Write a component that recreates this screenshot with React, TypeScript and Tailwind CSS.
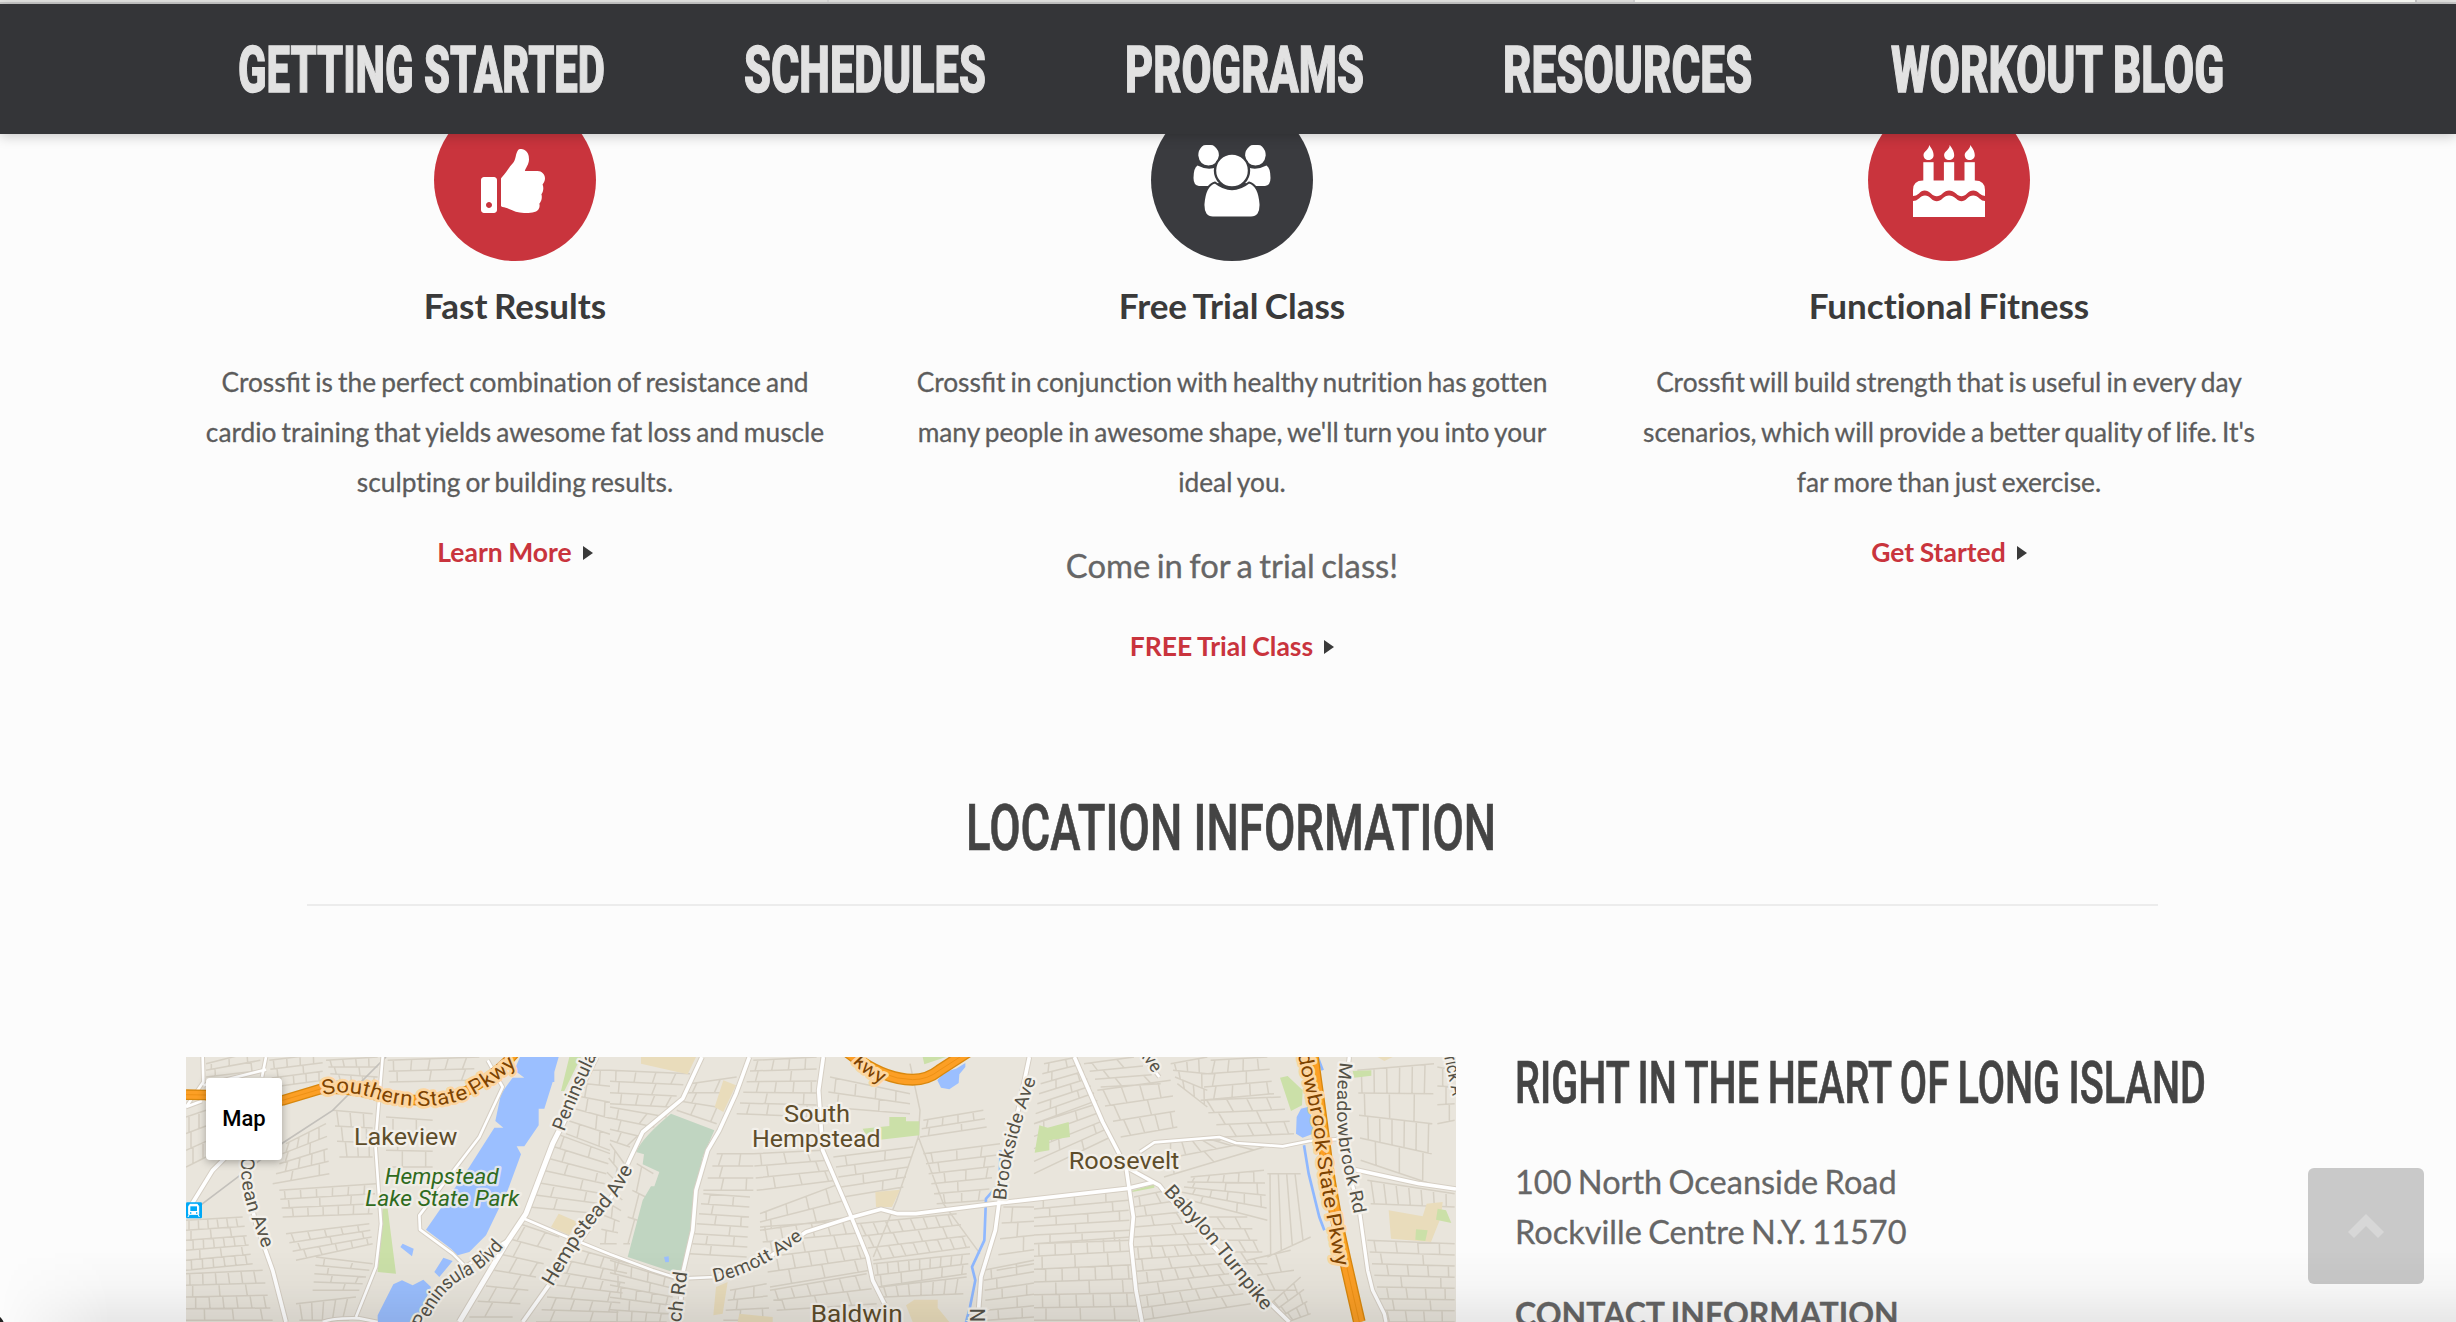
import { useLayoutEffect, useRef, useState, type ReactNode } from "react";
import { FaThumbsUp } from "react-icons/fa";

type Pt = [number, number];

/** Single line of condensed type squeezed to the width of its box. */
function Condensed({ className, children }: { className: string; children: string }) {
  const box = useRef<HTMLSpanElement>(null);
  const text = useRef<HTMLSpanElement>(null);
  const [scale, setScale] = useState(0.7);
  useLayoutEffect(() => {
    if (box.current && text.current) {
      setScale(box.current.offsetWidth / text.current.offsetWidth);
    }
  }, []);
  return (
    <span ref={box} className={`block whitespace-nowrap ${className}`}>
      <span ref={text} className="inline-block origin-left" style={{ transform: `scaleX(${scale})` }}>
        {children}
      </span>
    </span>
  );
}

/** Body copy that keeps only the "fi" ligature. */
function Copy({ children }: { children: string }) {
  return (
    <>
      {children.split("fi").map((part, i) => (
        <span key={i}>
          {i > 0 && <span className="[font-variant-ligatures:common-ligatures]">fi</span>}
          {part}
        </span>
      ))}
    </>
  );
}

function Nav() {
  const items: [string, string][] = [
    ["GETTING STARTED", "w-[367px]"],
    ["SCHEDULES", "w-[242px]"],
    ["PROGRAMS", "w-[239px]"],
    ["RESOURCES", "w-[249px]"],
    ["WORKOUT BLOG", "w-[333px]"],
  ];
  return (
    <header className="relative z-10 shrink-0">
      <div className="flex h-1 border-b-2 border-[#cbcbcb] bg-[#e6e6e4]">
        <div className="w-[829px] border-r-2 border-[#cfcfcf]" />
        <div className="w-[806px] border-r-2 border-[#cfcfcf]" />
        <div className="w-[782px] border-r-2 border-[#c0c0c0] bg-[#f4f5f0]" />
      </div>
      <nav className="flex h-[130px] items-center justify-center gap-[139px] bg-[#343538] pt-[2px] pl-[5px] shadow-[0_2px_12px_rgba(0,0,0,0.22)]">
        {items.map(([label, width]) => (
          <a
            key={label}
            className={`font-[Roboto] text-[64px] leading-[75px] font-extrabold text-[#e2e2e2] [-webkit-text-stroke:1.4px_#e2e2e2] ${width}`}
          >
            <Condensed className="w-full">{label}</Condensed>
          </a>
        ))}
      </nav>
    </header>
  );
}

function PeopleIcon() {
  return (
    <svg className="mt-[2px] h-[74px] w-[78px]" viewBox="0 0 78 74" fill="#fff">
      <path d="M9 2.400Q10.500 1 13 1H18Q20 1 21.600 2.400Q26 6 25.900 11.500Q24.500 21 15.500 21.400Q6.500 21 5.300 11.500Q5.200 6 9 2.400Z" />
      <path d="M56.400 2.400Q58 1 60 1H65Q67.500 1 69 2.400Q72.800 6 72.700 11.500Q71.500 21 62.500 21.400Q53.500 21 52.100 11.500Q52 6 56.400 2.400Z" />
      <path d="M4.500 21.500Q15 27 24 23Q23 33 28 38L19 42H6Q.5 41.500.5 34Q.5 24 4.500 21.500Z" />
      <path d="M73.500 21.500Q63 27 54 23Q55 33 50 38L59 42H72Q77.500 41.500 77.500 34Q77.500 24 73.500 21.500Z" />
      <path
        d="M22 38.500Q39 52 56 38.500Q66 41 67.500 60Q68 73.500 58 73.500H20Q10 73.500 10.500 60Q12 41 22 38.500Z"
        stroke="#3a3b3f"
        strokeWidth="2"
      />
      <circle cx="39" cy="26.500" r="17" stroke="#3a3b3f" strokeWidth="2.400" />
    </svg>
  );
}

function CakeIcon() {
  return (
    <svg className="mt-[2px] h-[72px] w-[72px]" viewBox="0 0 72 72" fill="#fff">
      {[10.3, 30.9, 51.500].map((x) => (
        <g key={x} transform={`translate(${x} 0)`}>
          <path d="M5.800 0C9 4.500 10.300 7 10.300 10.200C10.300 13 8 15 5.200 15C2.400 15 .2 13 .2 10C.2 6 5.800 5 5.800 0Z" />
          <rect y="17.200" width="10.300" height="20" />
        </g>
      ))}
      <path d="M0 51V45Q0 35.500 10 35.500H62Q72 35.500 72 45V51Q69 50.500 66.500 48.500C63 44.500 57.500 44.500 54 48.500C50.500 52 46.500 52 43 48.500C38.500 44.500 33.500 44.500 29.500 48.500C26 52 21.500 52 18 48.500C14 44.500 9 44.500 6 48.500Q3 51 0 51Z" />
      <path d="M0 56Q3 56 6 53.500C9.500 49.500 14.500 49.500 18 53.500C21.500 57 26 57 29.500 53.500C33.500 49.500 38.500 49.500 43 53.500C46.500 57 50.500 57 54 53.500C57.500 49.500 63 49.500 66.500 53.500Q69 56 72 56V72H0Z" />
    </svg>
  );
}

function Feature({
  icon,
  circle,
  title,
  lines,
  note,
  link,
}: {
  icon: ReactNode;
  circle: string;
  title: string;
  lines: string[];
  note?: string;
  link: string;
}) {
  return (
    <section className="flex w-[656px] flex-col items-center text-center [font-variant-ligatures:none]">
      <div className={`flex size-[162px] items-center justify-center rounded-full ${circle}`}>{icon}</div>
      <h3 className="mt-[23px] text-[35px] leading-[42px] font-bold [word-spacing:-2px] text-[#3a3a3a]">{title}</h3>
      <p className="mt-[31px] text-[26.300px] leading-[50px] [word-spacing:-1.600px] whitespace-nowrap text-[#5c5c5c] [-webkit-text-stroke:0.3px_#5c5c5c]">
        {lines.map((l) => (
          <span key={l} className="block">
            <Copy>{l}</Copy>
          </span>
        ))}
      </p>
      {note && (
        <p className="mt-[34px] mb-[10px] text-[32.800px] leading-[50px] [word-spacing:-2px] text-[#666] [-webkit-text-stroke:0.3px_#666]">
          {note}
        </p>
      )}
      <a className="mt-[20px] flex items-center gap-[11px] text-[26.500px] leading-[50px] font-bold [word-spacing:-1px] text-[#c9343d]">
        {link}
        <span className="mt-[2px] border-y-[7px] border-l-[10px] border-y-transparent border-l-[#3a3a3a]" />
      </a>
    </section>
  );
}

/** Street grid: bilinear interpolation over a quad a-b-c-d. */
function grid(a: Pt, b: Pt, c: Pt, d: Pt, rows: number, cols: number) {
  const mix = (p: Pt, q: Pt, t: number): Pt => [p[0] + (q[0] - p[0]) * t, p[1] + (q[1] - p[1]) * t];
  const f = (p: Pt) => `${p[0].toFixed(0)} ${p[1].toFixed(0)}`;
  let out = "";
  for (let i = 0; i <= rows; i++) {
    const t = rows ? i / rows : 0;
    out += `M${f(mix(a, d, t))}L${f(mix(b, c, t))}`;
  }
  for (let j = 0; j < cols; j++) {
    for (let i = 0; i < rows; i++) {
      const t = (j + 0.3 + 0.4 * ((i * 7 + j * 3) % 3) * 0.5) / cols;
      const top = mix(mix(a, b, t), mix(d, c, t), i / rows);
      const end = mix(mix(a, b, t), mix(d, c, t), (i + 1) / rows);
      if ((i + j * 2) % 4 !== 3) out += `M${f(top)}L${f(end)}`;
    }
  }
  return out;
}

const streetsWest = [
  grid([60, 20], [220, -20], [225, 40], [60, 60], 2, 3),
  grid([0, 180], [60, 160], [60, 300], [0, 330], 3, 2),
  grid([250, 10], [410, -10], [410, 70], [260, 90], 3, 4),
  grid([420, 10], [575, 0], [575, 90], [440, 70], 3, 4),
  grid([605, 10], [880, 0], [850, 70], [610, 75], 2, 5),
  grid([300, 260], [420, 200], [430, 350], [260, 380], 4, 4),
  grid([440, 160], [560, 170], [560, 300], [460, 300], 3, 3),
  grid([280, 400], [570, 380], [560, 470], [290, 480], 3, 6),
  grid([0, 490], [170, 480], [200, 620], [0, 640], 5, 6),
  grid([0, 650], [230, 640], [260, 790], [0, 790], 4, 6),
  grid([300, 530], [550, 500], [560, 560], [330, 610], 3, 5),
  grid([390, 600], [560, 620], [520, 700], [380, 700], 4, 2),
  grid([330, 740], [510, 720], [490, 790], [340, 790], 1, 5),
  grid([600, 180], [740, 190], [740, 330], [600, 330], 3, 2),
  grid([1110, 230], [1272, 290], [1240, 470], [1030, 450], 6, 2),
  grid([1190, 40], [1272, 40], [1272, 280], [1140, 230], 5, 2),
  grid([1000, 500], [1120, 540], [980, 780], [850, 780], 6, 2),
  grid([1150, 570], [1330, 620], [1290, 795], [1050, 795], 6, 4),
].join("");

const streetsMid = [
  grid([0, 40], [240, 50], [180, 150], [0, 140], 3, 4),
  grid([0, 150], [170, 180], [60, 270], [0, 250], 3, 2),
  grid([240, 80], [380, 60], [320, 200], [200, 160], 3, 2),
  grid([430, 10], [620, 0], [620, 180], [380, 170], 5, 4),
  grid([0, 260], [50, 330], [20, 560], [-30, 560], 7, 1),
  grid([80, 320], [130, 350], [60, 560], [40, 560], 3, 1),
  grid([660, 60], [900, 110], [900, 170], [650, 150], 2, 4),
  grid([320, 290], [430, 290], [430, 400], [280, 400], 3, 2),
  grid([430, 290], [640, 280], [680, 370], [440, 400], 3, 3),
  grid([280, 410], [420, 420], [410, 600], [240, 590], 6, 2),
  grid([450, 470], [690, 380], [720, 480], [450, 520], 2, 4),
  grid([670, 300], [910, 270], [880, 390], [700, 420], 4, 2),
  grid([940, 290], [1170, 260], [1130, 430], [980, 440], 5, 3),
  grid([940, 190], [1120, 160], [1130, 210], [930, 240], 2, 4),
  grid([450, 510], [730, 490], [780, 640], [480, 690], 4, 6),
  grid([740, 500], [1040, 470], [1080, 570], [790, 610], 3, 8),
  grid([790, 620], [1080, 590], [1070, 650], [800, 690], 2, 9),
  grid([810, 690], [1070, 660], [1060, 710], [820, 720], 1, 7),
  grid([480, 700], [770, 650], [800, 740], [500, 760], 2, 6),
  grid([360, 700], [470, 680], [480, 790], [340, 790], 3, 2),
  grid([0, 610], [200, 670], [170, 795], [0, 795], 5, 4),
  grid([1180, 450], [1272, 450], [1272, 620], [1160, 640], 4, 1),
  grid([1120, 640], [1272, 610], [1272, 780], [1130, 790], 5, 2),
  "M900 20L930 160L925 240L1000 440L1110 590M925 240L860 430L790 600",
].join("");

const streetsEast = [
  grid([30, 20], [130, 0], [190, 130], [0, 200], 6, 2),
  grid([0, 200], [190, 140], [230, 240], [0, 350], 4, 2),
  grid([150, 20], [300, 0], [380, 80], [200, 90], 3, 2),
  grid([190, 100], [410, 70], [430, 210], [260, 240], 3, 4),
  grid([410, 20], [520, 0], [520, 150], [430, 80], 3, 3),
  grid([530, 10], [700, 0], [720, 110], [500, 130], 3, 4),
  grid([500, 130], [740, 120], [780, 230], [570, 240], 3, 4),
  grid([400, 250], [560, 250], [690, 270], [390, 360], 2, 5),
  grid([470, 360], [690, 340], [700, 490], [430, 420], 4, 5),
  grid([700, 350], [800, 350], [830, 540], [700, 600], 1, 4),
  grid([0, 430], [280, 400], [290, 550], [0, 560], 5, 3),
  grid([0, 560], [290, 540], [310, 790], [0, 790], 6, 6),
  grid([300, 420], [400, 400], [520, 560], [300, 570], 5, 2),
  grid([300, 570], [520, 560], [650, 740], [320, 790], 6, 6),
  grid([480, 480], [640, 480], [700, 620], [600, 620], 4, 3),
  grid([640, 610], [770, 580], [790, 700], [700, 700], 2, 2),
  grid([710, 740], [800, 660], [830, 770], [760, 795], 3, 3),
  grid([970, 40], [1200, 20], [1190, 380], [980, 310], 4, 6),
  grid([1210, 30], [1262, 40], [1262, 190], [1210, 200], 3, 1),
  grid([1000, 370], [1262, 410], [1262, 450], [1010, 440], 1, 7),
  grid([1000, 550], [1262, 560], [1262, 795], [1050, 795], 7, 4),
].join("");

type Road = { d: string; w?: number };
const roads: Road[] = [
  { d: "M50 0L52 75L0 150M52 85L240 38M240 0L228 60M48 132L0 150" },
  { d: "M590 0L568 260L585 500L570 630L510 780M410 795Q440 782 520 784L575 795" },
  { d: "M905 10L950 90L880 240L700 475L702 518L800 590L838 628L965 550" },
  { d: "M18 440L80 340L120 300M185 400L210 500L260 640L300 795", w: 11 },
  { d: "M1230 0L1100 260L1020 470L960 560L820 795", w: 15 },
  { d: "M1015 485L1120 530L1272 592L1400 640L1480 665L1590 660" },
  { d: "M1548 0L1490 125L1370 225L1330 310L1290 400L1010 795", w: 11 },
  { d: "M1690 0L1650 110L1600 220L1565 280L1530 400L1520 520L1490 650L1480 795", w: 11 },
  { d: "M1912 0L1898 100L1910 280L1996 480L2045 600L2060 670L2105 760", w: 11 },
  { d: "M1585 660L1750 600L1860 525L2000 480L2085 457L2135 470L2190 470L2440 438L2820 395L2905 375", w: 11 },
  { d: "M2530 0L2440 430L2428 520L2385 660L2375 795", w: 11 },
  { d: "M2665 0L2750 195L2820 330L2842 480L2835 560L2850 700L2868 795", w: 11 },
  { d: "M2820 330L2920 385L2940 410L3130 620L3310 795", w: 11 },
  { d: "M2862 285L2905 256L3100 240L3150 258L3290 268L3370 252L3460 246" },
  { d: "M3490 0L3460 240L3520 460L3545 640L3560 700L3595 770L3600 795", w: 10 },
  { d: "M3495 335L3700 380L3810 396", w: 11 },
  { d: "M2858 -20L2920 60" },
];

const labelPaths: Record<string, string> = {
  southern: "M412 116Q470 95 560 122Q700 170 840 126Q930 85 1010 5",
  ocean: "M166 300Q160 380 190 470Q212 520 238 600",
  peninsula: "M1135 225Q1190 80 1260 -60",
  blvd: "M715 815Q755 710 830 665Q920 625 980 530",
  hempAve: "M1100 690L1190 540L1300 410L1350 320",
  demott: "M1585 675Q1720 650 1870 530",
  ch: "M1480 830L1505 640",
  kwy: "M2000 15Q2035 60 2110 90",
  brookside: "M2460 430Q2470 280 2560 40",
  nAve: "M2850 -18Q2885 20 2905 58",
  babylon: "M2932 405L3060 545L3235 765",
  meadowPkwy: "M3320 -80Q3350 60 3380 190Q3395 350 3450 630",
  meadowRd: "M3462 15Q3440 180 3472 330Q3490 400 3505 480",
  rick: "M3775 0L3800 120",
};

function RoadLabel({ path, size, length, highway, children }: { path: string; size: number; length: number; highway?: boolean; children: string }) {
  return (
    <text
      fontSize={size}
      fill={highway ? "#7d4300" : "#555247"}
      stroke={highway ? "#fdd6a0" : "#f3f0ea"}
      strokeWidth={highway ? 16 : 14}
      strokeLinejoin="round"
      paintOrder="stroke"
    >
      <textPath href={`#${path}`} textLength={length} lengthAdjust="spacingAndGlyphs">
        {children}
      </textPath>
    </text>
  );
}

function PlaceLabel({ x, y, length, size = 70, park, children }: { x: number; y: number; length: number; size?: number; park?: boolean; children: string }) {
  return (
    <text
      x={x}
      y={y}
      fontSize={size}
      fontStyle={park ? "italic" : "normal"}
      fill={park ? "#2f6b20" : "#5e4d2a"}
      stroke="#f3f0ea"
      strokeOpacity={park ? 0.75 : 1}
      strokeWidth="14"
      strokeLinejoin="round"
      paintOrder="stroke"
      textLength={length}
      lengthAdjust="spacingAndGlyphs"
    >
      {children}
    </text>
  );
}

function StreetMap() {
  return (
    <svg className="block h-[265px] w-[1270px] font-[Roboto]" viewBox="0 0 3810 795">
      <defs>
        {Object.entries(labelPaths).map(([id, d]) => (
          <path key={id} id={id} d={d} />
        ))}
      </defs>
      <rect width="3810" height="795" fill="#e9e5dc" />

      <g fill="none" stroke="#d6d0c4" strokeWidth="4.500">
        <path d={streetsWest} />
        <path d={streetsMid} transform="translate(1272 0)" />
        <path d={streetsEast} transform="translate(2544 0)" />
      </g>
      <path d="M30 455L290 258L440 160L600 0" fill="none" stroke="#c3c0bb" strokeWidth="5" />

      <path fill="#e9dcbb" d="M1365 0H1530L1505 52L1365 20ZM1612 70L1650 85L1612 165L1586 150ZM1118 470L1175 495L1150 535L1095 510ZM2068 405L2142 398L2118 450H2070ZM1590 690L1625 675L1610 770L1582 775ZM1660 770L1760 780V795H1655ZM2160 745L2185 728H2255V752L2290 795H2180ZM3608 460L3710 478L3722 440L3770 435L3765 480L3735 555L3615 545ZM3575 0H3620L3595 12Z" />
      <path fill="#cbe0a8" d="M590 455H605L630 650L575 645ZM1150 0H1185L1135 102H1125ZM2110 180H2160V193H2200V235L2050 252L2030 215L2110 207ZM2210 0H2280L2215 22ZM2560 205L2585 212L2648 195L2652 240L2590 250V280L2546 287ZM2835 402L2905 382V392L2835 406ZM3282 62L3305 57L3350 100L3348 145L3315 162ZM3500 42L3556 40V56L3505 62ZM3755 455L3780 460L3796 498L3750 488ZM3690 517L3725 520L3718 552L3688 548Z" />
      <path fill="#c0d5c1" d="M1455 170L1585 220L1550 300L1530 400L1522 520L1490 655L1325 600L1370 430L1395 388H1405L1420 345L1370 322L1374 292L1350 285Q1370 240 1455 170Z" />
      <g fill="#9bbfff">
        <path d="M1002 0H1118L1105 45V75H1100L1075 155H1058V205L1015 268H992L1005 292L965 400L900 535L850 585L815 595L795 575L720 518L850 330L925 212L952 212L928 192L945 110L980 62H1015L985 40Z" />
        <path d="M650 560L683 575L678 598L643 570ZM772 602L800 612L760 660L745 645ZM575 795V775L622 682L648 670L680 685L712 668L735 690L690 795ZM1434 600L1448 598L1449 615L1438 616Z" />
        <path d="M2338 18L2310 35L2275 45L2254 70L2265 92L2290 97L2318 78L2320 52L2338 30ZM3365 150L3345 155L3332 180L3330 230L3350 242L3395 225Z" />
      </g>
      <g fill="none" stroke="#8fb8ff" strokeWidth="8">
        <path d="M2444 280L2440 380L2400 425L2395 550L2358 630L2368 670L2352 750L2340 795" />
        <path d="M3354 265L3368 350L3390 440L3400 480L3415 520M3395 0L3410 40" />
      </g>

      <g fill="none" strokeLinejoin="round">
        {roads.map((r) => (
          <path key={r.d} d={r.d} stroke="#d6cfc4" strokeWidth={(r.w ?? 8) + 6} />
        ))}
        {roads.map((r) => (
          <path key={r.d} d={r.d} stroke="#fff" strokeWidth={r.w ?? 8} />
        ))}
        {[
          { d: "M0 113L60 114Q200 150 290 130L400 97Q450 90 530 105Q700 155 840 103Q930 55 985 -10", w: 32 },
          { d: "M1985 -15Q2090 68 2180 68Q2225 68 2260 40L2345 -15", w: 36 },
          { d: "M3378 -10Q3405 180 3420 300Q3440 450 3480 620L3520 795", w: 38 },
        ].map((h) => (
          <g key={h.d}>
            <path d={h.d} stroke="#d9880e" strokeWidth={h.w} />
            <path d={h.d} stroke="#fc9f25" strokeWidth={h.w - 8} />
            <path d={h.d} stroke="#ee9115" strokeWidth="3" />
          </g>
        ))}
      </g>

      <RoadLabel path="southern" size={62} length={620} highway>Southern State Pkwy</RoadLabel>
      <RoadLabel path="ocean" size={56} length={285}>Ocean Ave</RoadLabel>
      <RoadLabel path="peninsula" size={58} length={250}>Peninsula</RoadLabel>
      <RoadLabel path="blvd" size={58} length={350}>Peninsula Blvd</RoadLabel>
      <RoadLabel path="hempAve" size={60} length={430}>Hempstead Ave</RoadLabel>
      <RoadLabel path="demott" size={56} length={300}>Demott Ave</RoadLabel>
      <RoadLabel path="ch" size={58} length={185}>ach Rd</RoadLabel>
      <RoadLabel path="kwy" size={58} length={110} highway>kwy</RoadLabel>
      <RoadLabel path="brookside" size={56} length={375}>Brookside Ave</RoadLabel>
      <RoadLabel path="nAve" size={54} length={85}>Ave</RoadLabel>
      <RoadLabel path="babylon" size={58} length={468}>Babylon Turnpike</RoadLabel>
      <RoadLabel path="meadowPkwy" size={60} length={722} highway>eadowbrook State Pkwy</RoadLabel>
      <RoadLabel path="meadowRd" size={54} length={462}>Meadowbrook Rd</RoadLabel>
      <RoadLabel path="rick" size={54} length={120}>rick A</RoadLabel>
      <text x="2398" y="795" fontSize="58" fill="#555247" stroke="#f3f0ea" strokeWidth="14" paintOrder="stroke" transform="rotate(-90 2398 795)">
        N
      </text>

      <PlaceLabel x={504} y={264} length={310}>Lakeview</PlaceLabel>
      <PlaceLabel x={596} y={380} length={342} size={64} park>Hempstead</PlaceLabel>
      <PlaceLabel x={538} y={446} length={462} size={64} park>Lake State Park</PlaceLabel>
      <PlaceLabel x={1794} y={194} length={198} size={72}>South</PlaceLabel>
      <PlaceLabel x={1698} y={270} length={386} size={72}>Hempstead</PlaceLabel>
      <PlaceLabel x={2648} y={336} length={332} size={72}>Roosevelt</PlaceLabel>
      <PlaceLabel x={1874} y={796} length={276} size={72}>Baldwin</PlaceLabel>

      <g>
        <rect y="436" width="48" height="48" rx="4" fill="#00a9f7" />
        <path d="M12 442H34L38 448V472H8V448ZM10 472L6 480M36 472L40 480" fill="#fff" stroke="#fff" strokeWidth="3" />
        <rect x="13" y="448" width="20" height="14" fill="#00a9f7" />
        <path d="M12 468H16M30 468H34" stroke="#00a9f7" strokeWidth="4" />
      </g>
    </svg>
  );
}

export default function App() {
  return (
    <div className="relative flex h-[1322px] w-[2456px] flex-col overflow-hidden bg-[#fcfcfc] font-[Lato,sans-serif]">
      <Nav />
      <main className="-mt-[35px] flex flex-col pl-[186px]">
        <div className="flex h-[667px] gap-[61px] pl-[1px]">
          <Feature
            icon={<FaThumbsUp className="mt-[2px] mr-[4px] size-[64px] text-white" />}
            circle="bg-[#c9343d]"
            title="Fast Results"
            lines={[
              "Crossfit is the perfect combination of resistance and",
              "cardio training that yields awesome fat loss and muscle",
              "sculpting or building results.",
            ]}
            link="Learn More"
          />
          <Feature
            icon={<PeopleIcon />}
            circle="bg-[#3a3b3f]"
            title="Free Trial Class"
            lines={[
              "Crossfit in conjunction with healthy nutrition has gotten",
              "many people in awesome shape, we'll turn you into your",
              "ideal you.",
            ]}
            note="Come in for a trial class!"
            link="FREE Trial Class"
          />
          <Feature
            icon={<CakeIcon />}
            circle="bg-[#c9343d]"
            title="Functional Fitness"
            lines={[
              "Crossfit will build strength that is useful in every day",
              "scenarios, which will provide a better quality of life. It's",
              "far more than just exercise.",
            ]}
            link="Get Started"
          />
        </div>

        <div className="ml-[121px] flex h-[140px] w-[1851px] flex-col items-center border-b-2 border-[#ececec] pt-[25px] pr-[4px]">
          <h2 className="font-[Roboto] text-[64px] leading-[75px] font-medium text-[#444] [-webkit-text-stroke:0.7px_#444]">
            <Condensed className="w-[530px]">LOCATION INFORMATION</Condensed>
          </h2>
        </div>

        <div className="mt-[151px] flex h-[265px] gap-[59px]">
          <div className="relative">
            <StreetMap />
            <button className="absolute top-[21px] left-[20px] h-[82px] w-[76px] rounded-[4px] bg-white pb-[2px] font-[Roboto] text-[22px] font-medium text-black shadow-[0_2px_8px_rgba(0,0,0,0.3)]">
              Map
            </button>
          </div>
          <div className="text-[32.500px] leading-[50px] [word-spacing:-2px] text-[#666] [-webkit-text-stroke:0.3px_#666] [font-variant-ligatures:none]">
            <h3 className="-mt-[9px] font-[Roboto] text-[60px] leading-[70px] font-medium text-[#444] [-webkit-text-stroke:0.7px_#444]">
              <Condensed className="w-[691px]">RIGHT IN THE HEART OF LONG ISLAND</Condensed>
            </h3>
            <p className="mt-[39px]">100 North Oceanside Road</p>
            <p>Rockville Centre N.Y. 11570</p>
            <p className="mt-[32px] text-[32px] font-bold [word-spacing:-1px]">CONTACT INFORMATION</p>
          </div>
        </div>
      </main>

      <button className="absolute top-[1168px] left-[2308px] flex size-[116px] items-center justify-center rounded-[6px] bg-[#c9c9c9]">
        <svg className="h-[24px] w-[36px]" viewBox="0 0 36 24" fill="#d7d7d7">
          <path d="M18 0L36 18L30 24L18 12L6 24L0 18Z" />
        </svg>
      </button>
      <div className="pointer-events-none absolute right-0 bottom-0 left-0 h-[72px] bg-gradient-to-b from-transparent via-black/[0.025] to-black/[0.08] [mask-image:linear-gradient(to_right,transparent,black_110px)]" />
      <div className="pointer-events-none absolute -bottom-[4px] -left-[6px] h-[11px] w-[10px] rounded-tr-full bg-[#222]" />
    </div>
  );
}
